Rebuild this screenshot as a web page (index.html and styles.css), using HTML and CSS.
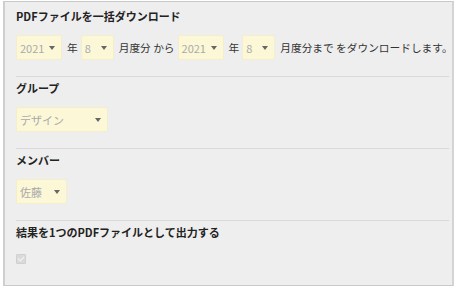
FILE: index.html
```html
<!DOCTYPE html>
<html lang="ja">

<head>
    <meta charset="UTF-8">
    <title>PDFファイルを一括ダウンロード</title>
    <link rel="stylesheet" href="styles.css">
</head>

<body>
    <div class="panel">
        <!-- 期間 -->
        <div class="section">
            <div class="label">PDFファイルを一括ダウンロード</div>
            <div class="row">
                <span class="select w-year">2021<i class="arrow"></i></span>
                <span class="txt">年</span>
                <span class="select w-month">8<i class="arrow"></i></span>
                <span class="txt">月度分 から</span>
                <span class="select w-year">2021<i class="arrow"></i></span>
                <span class="txt">年</span>
                <span class="select w-month">8<i class="arrow"></i></span>
                <span class="txt">月度分まで をダウンロードします。</span>
            </div>
        </div>
        <!-- グループ -->
        <div class="section">
            <div class="label">グループ</div>
            <div class="row">
                <span class="select w-group">デザイン<i class="arrow"></i></span>
            </div>
        </div>
        <!-- メンバー -->
        <div class="section">
            <div class="label">メンバー</div>
            <div class="row">
                <span class="select w-member">佐藤<i class="arrow"></i></span>
            </div>
        </div>
        <!-- 出力 -->
        <div class="section last">
            <div class="label">結果を1つのPDFファイルとして出力する</div>
            <div class="row">
                <span class="check"></span>
            </div>
        </div>
    </div>
</body>

</html>
```

FILE: styles.css
```css
/* 基本样式 */

body {
    margin: 0;
    padding: 1px 3px 0 3px;
    background: #fff;
    font-family: "Noto Sans CJK JP", "Noto Sans", sans-serif;
    font-size: 11px;
    color: #333;
}

.panel {
    height: 285px;
    box-sizing: border-box;
    background: #eeeeee;
    border: 1px solid #c9c9c9;
    border-left: 2px solid #cfcfcf;
    border-right: 2px solid #d4d4d4;
    padding: 3px 3px 0 11px;
}

.section {
    border-bottom: 1px solid #d9d9d9;
    padding: 4px 0 16px;
}

.section.last {
    border-bottom: none;
}

.label {
    font-weight: bold;
    font-size: 11px;
    line-height: 15px;
    color: #222;
    white-space: nowrap;
}

.row {
    display: flex;
    align-items: center;
    margin-top: 11px;
    white-space: nowrap;
}

.txt {
    flex: none;
    margin: 0 3px 0 5px;
    font-size: 10.7px;
    color: #333;
}

/******************** セレクト ***********************/

.select {
    flex: none;
    display: flex;
    align-items: center;
    justify-content: space-between;
    height: 25px;
    box-sizing: border-box;
    padding: 0 6px 0 3px;
    background: #fcf7d6;
    border: 1px solid #f3eecb;
    border-radius: 2px;
    color: #aaa;
    font-size: 11px;
}

.arrow {
    width: 0;
    height: 0;
    border-left: 3px solid transparent;
    border-right: 3px solid transparent;
    border-top: 4px solid #666;
}

.w-year {
    width: 46px;
}

.w-month {
    width: 33px;
}

.w-group {
    width: 92px;
}

.w-member {
    width: 51px;
}

/******************** チェックボックス ***********************/

.check {
    position: relative;
    display: block;
    width: 10px;
    height: 10px;
    box-sizing: border-box;
    margin-top: 3px;
    background: #dadada;
    border: 1px solid #d0d0d0;
    border-radius: 1px;
}

.check::after {
    content: "";
    position: absolute;
    left: 2px;
    top: 0;
    width: 3px;
    height: 5px;
    border-right: 1.5px solid #f4f4f4;
    border-bottom: 1.5px solid #f4f4f4;
    transform: rotate(45deg);
}
```
